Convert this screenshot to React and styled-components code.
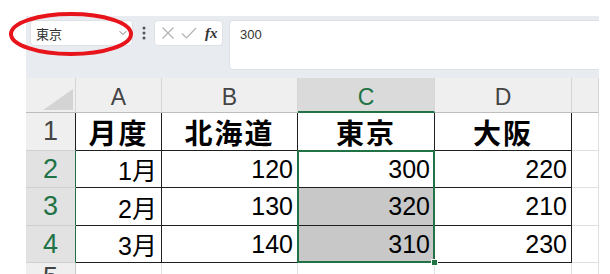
import React from "react";
import styled, { createGlobalStyle } from "styled-components";
import { ChevronDown } from "lucide-react";

const GREEN = "#217346";
const INK = "#1f1f1f";

const COL_W = [50, 86, 136, 137, 137];
const ROW_H = [35, 38, 37, 38, 37];

const GlobalStyle = createGlobalStyle`
  html, body {
    margin: 0;
    padding: 0;
    background: #fff;
  }
  body {
    font-family: "Liberation Sans", "Noto Sans CJK JP", sans-serif;
  }
`;

const Page = styled.div`
  position: relative;
  width: 610px;
  height: 274px;
  overflow: hidden;
  padding-top: 16px;
  box-sizing: border-box;
`;

const Window = styled.div`
  margin-left: 26px;
  width: 573px;
  height: 258px;
  overflow: hidden;
  display: flex;
  flex-direction: column;
`;

const Toolbar = styled.div`
  display: flex;
  align-items: flex-start;
  height: 62px;
  flex-shrink: 0;
  box-sizing: border-box;
  padding: 4px 0 8px 4px;
  background: #e8ecf1;
`;

const NameBox = styled.div`
  width: 103px;
  height: 26px;
  box-sizing: border-box;
  background: #fff;
  border: 1px solid #dde1e6;
  border-radius: 4px;
  display: flex;
  align-items: center;
  justify-content: space-between;
  padding: 0 3px 0 5px;
  font-family: "Noto Sans CJK JP", sans-serif;
  font-size: 13px;
  color: #333;
`;

const Kebab = styled.div`
  width: 21px;
  height: 26px;
  display: flex;
  align-items: center;
  justify-content: center;
`;

const ButtonGroup = styled.div`
  width: 69px;
  height: 26px;
  box-sizing: border-box;
  background: #fff;
  border: 1px solid #dde1e6;
  border-radius: 4px;
  display: flex;
  align-items: center;
  padding: 0 4px 0 6px;
  gap: 6px;
`;

const Fx = styled.span`
  margin-left: 2px;
  font-family: "Liberation Serif", serif;
  font-style: italic;
  font-weight: bold;
  font-size: 15px;
  color: #333;
`;

const FormulaBar = styled.div`
  flex: 1;
  margin: 0 -8px 0 6px;
  height: 50px;
  box-sizing: border-box;
  background: #fff;
  border: 1px solid #dde1e6;
  border-radius: 4px;
  padding: 6px 10px;
  font-size: 13px;
  color: #333;
`;

const Sheet = styled.div`
  position: relative;
  display: grid;
  grid-template-columns: ${COL_W.map((w) => w + "px").join(" ")} 1fr;
  grid-template-rows: ${ROW_H.map((h) => h + "px").join(" ")} 30px;
`;

const Corner = styled.div`
  background: #efefef;
  border-right: 1px solid #d6d6d6;
  border-bottom: 1px solid #bdbdbd;
  box-sizing: border-box;
  display: flex;
  align-items: flex-end;
  justify-content: flex-end;
  padding: 0 2px 2px 0;
`;

const Triangle = styled.div`
  width: 30px;
  height: 21px;
  background: #d4d4d4;
  clip-path: polygon(100% 0, 100% 100%, 0 100%);
`;

const ColHead = styled.div`
  box-sizing: border-box;
  background: ${(p) => (p.$sel ? "#dadada" : "#efefef")};
  border-right: 1px solid #d6d6d6;
  border-bottom: ${(p) => (p.$sel ? `2px solid ${GREEN}` : "1px solid #bdbdbd")};
  display: flex;
  justify-content: center;
  align-items: center;
  padding-top: 5px;
  font-size: 23px;
  color: ${(p) => (p.$sel ? GREEN : "#444")};
`;

const RowHead = styled.div`
  box-sizing: border-box;
  background: ${(p) => (p.$sel ? "#e2e2e2" : "#efefef")};
  border-bottom: 1px solid #d0d0d0;
  border-right: 1px solid ${(p) => p.$edge || "#c8c8c8"};
  display: flex;
  justify-content: center;
  align-items: center;
  font-size: 27px;
  color: ${(p) => (p.$sel ? GREEN : "#444")};
`;

const Cell = styled.div`
  box-sizing: border-box;
  min-width: 0;
  overflow: hidden;
  white-space: nowrap;
  background: ${(p) => (p.$shade ? "#c8c8c8" : "#fff")};
  border-right: 1px solid ${(p) => (p.$table ? INK : "#e0e0e0")};
  border-bottom: 1px solid ${(p) => (p.$table ? INK : "#e0e0e0")};
  display: flex;
  align-items: center;
  justify-content: ${(p) => (p.$head ? "center" : "flex-end")};
  padding: 0 4px;
  color: #000;
  font-size: ${(p) => (p.$head ? "28px" : "25px")};
  font-weight: ${(p) => (p.$head ? 700 : 400)};
  font-family: ${(p) =>
    p.$head
      ? `"Noto Sans CJK JP", sans-serif`
      : `"Liberation Sans", "Noto Sans CJK JP", sans-serif`};
  letter-spacing: ${(p) => (p.$head ? "2px" : "0")};
`;

/* selection box laid over C2:C4 */
const Selection = styled.div`
  position: absolute;
  box-sizing: border-box;
  border: 2px solid ${GREEN};
  pointer-events: none;
`;

const Handle = styled.div`
  position: absolute;
  right: -5px;
  bottom: -5px;
  width: 5px;
  height: 5px;
  background: ${GREEN};
  border: 1px solid #fff;
`;

const Ring = styled.svg`
  position: absolute;
  left: 8px;
  top: 10px;
`;

const cols = ["A", "B", "C", "D", ""];
const rows = [
  ["月度", "北海道", "東京", "大阪"],
  ["1月", "120", "300", "220"],
  ["2月", "130", "320", "210"],
  ["3月", "140", "310", "230"],
];

const Dots = () => (
  <svg width="4" height="14" viewBox="0 0 4 14">
    <circle cx="2" cy="2" r="1.5" fill="#555" />
    <circle cx="2" cy="7" r="1.5" fill="#555" />
    <circle cx="2" cy="12" r="1.5" fill="#555" />
  </svg>
);

const Cross = () => (
  <svg width="14" height="14" viewBox="0 0 14 14">
    <path d="M1.5 1.5 L12.5 12.5 M12.5 1.5 L1.5 12.5" stroke="#b3b3b3" strokeWidth="1.2" fill="none" />
  </svg>
);

const Check = () => (
  <svg width="16" height="14" viewBox="0 0 16 14">
    <path d="M1 7.5 L5.5 12 L15 2" stroke="#b3b3b3" strokeWidth="1.2" fill="none" />
  </svg>
);

const sum = (a) => a.reduce((s, v) => s + v, 0);
const selBox = {
  left: sum(COL_W.slice(0, 3)) - 1,
  top: sum(ROW_H.slice(0, 2)) - 1,
  width: COL_W[3] + 1,
  height: sum(ROW_H.slice(2, 5)) + 1,
};

export default function App() {
  return (
    <>
      <GlobalStyle />
      <Page>
        <Window>
          <Toolbar>
            <NameBox>
              <span>東京</span>
              <ChevronDown size={12} color="#777" />
            </NameBox>
            <Kebab>
              <Dots />
            </Kebab>
            <ButtonGroup>
              <Cross />
              <Check />
              <Fx>fx</Fx>
            </ButtonGroup>
            <FormulaBar>300</FormulaBar>
          </Toolbar>
          <Sheet>
            <Corner>
              <Triangle />
            </Corner>
            {cols.map((c, i) => (
              <ColHead key={i} $sel={c === "C"}>
                {c}
              </ColHead>
            ))}
            {rows.map((r, ri) => (
              <React.Fragment key={ri}>
                <RowHead $sel={ri > 0} $edge={ri > 0 ? GREEN : INK}>
                  {ri + 1}
                </RowHead>
                {r.map((v, ci) => (
                  <Cell
                    key={ci}
                    $table
                    $head={ri === 0}
                    $shade={ci === 2 && ri > 1}
                  >
                    {v}
                  </Cell>
                ))}
                <Cell />
              </React.Fragment>
            ))}
            <RowHead>5</RowHead>
            {cols.map((c, i) => (
              <Cell key={i} />
            ))}
            <Selection style={selBox}>
              <Handle />
            </Selection>
          </Sheet>
        </Window>
        <Ring width="128" height="50" viewBox="0 0 128 50">
          <ellipse cx="63" cy="24" rx="60" ry="20" fill="none" stroke="#e8141b" strokeWidth="4" />
        </Ring>
      </Page>
    </>
  );
}
